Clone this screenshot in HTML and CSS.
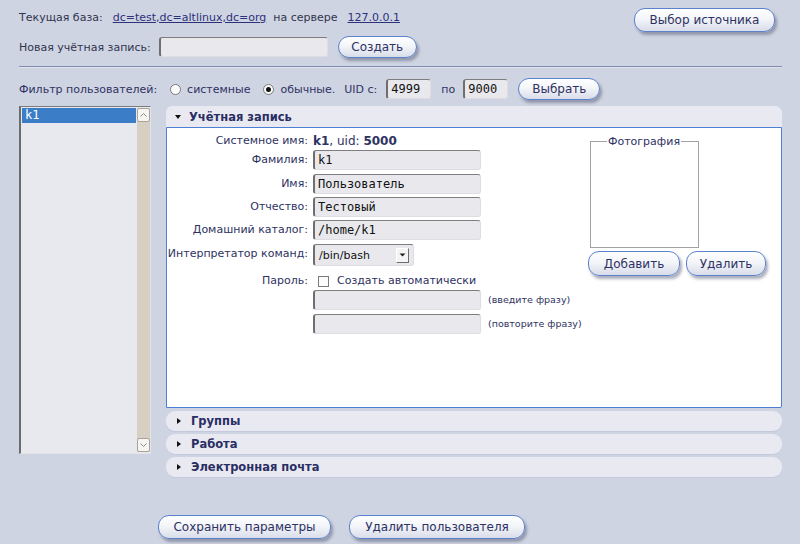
FILE: index.html
```html
<!DOCTYPE html>
<html lang="ru">
<head>
<meta charset="utf-8">
<title>Пользователи</title>
<link rel="stylesheet" href="styles.css">
</head>
<body>
<div class="page">
  <div class="top">
    <div class="top-left">
      <div class="row1">
        <span>Текущая база:</span>
        <a class="link base" href="#">dc=test,dc=altlinux,dc=org</a>
        <span>на сервере</span>
        <a class="link ip" href="#">127.0.0.1</a>
      </div>
      <div class="row2">
        <span>Новая учётная запись:</span>
        <input class="field new-acc" type="text">
        <button class="btn btn-create">Создать</button>
      </div>
    </div>
    <button class="btn btn-source">Выбор источника</button>
  </div>
  <div class="sep"></div>
  <div class="filter">
    <span class="flabel">Фильтр пользователей:</span>
    <span class="radio"></span><span class="rtext">системные</span>
    <span class="radio checked"></span><span class="rtext">обычные.</span>
    <span class="uid">UID с:</span>
    <input class="field small uid-from" type="text" value="4999">
    <span class="po">по</span>
    <input class="field small uid-to" type="text" value="9000">
    <button class="btn btn-select">Выбрать</button>
  </div>
  <div class="main">
    <div class="listbox">
      <div class="list-items">
        <div class="item sel">k1</div>
      </div>
      <div class="scrollbar">
        <div class="sb-btn"><svg width="9" height="6" viewBox="0 0 9 6"><path d="M1.5 4.5 L4.5 1.5 L7.5 4.5" fill="none" stroke="#8a8a8a" stroke-width="1"/></svg></div>
        <div class="sb-track"></div>
        <div class="sb-btn"><svg width="9" height="6" viewBox="0 0 9 6"><path d="M1.5 1.5 L4.5 4.5 L7.5 1.5" fill="none" stroke="#8a8a8a" stroke-width="1"/></svg></div>
      </div>
    </div>
    <div class="panels">
      <div class="hdr open"><span class="tri-down"></span><span class="htext">Учётная запись</span></div>
      <div class="content">
        <div class="form">
          <div class="lbl r-top">Системное имя:</div>
          <div class="val r-top"><b>k1</b>, uid: <b>5000</b></div>
          <div class="hint"></div>

          <div class="lbl">Фамилия:</div>
          <div><input class="field wide" type="text" value="k1"></div>
          <div class="hint"></div>

          <div class="lbl">Имя:</div>
          <div><input class="field wide" type="text" value="Пользователь"></div>
          <div class="hint"></div>

          <div class="lbl">Отчество:</div>
          <div><input class="field wide" type="text" value="Тестовый"></div>
          <div class="hint"></div>

          <div class="lbl">Домашний каталог:</div>
          <div><input class="field wide" type="text" value="/home/k1"></div>
          <div class="hint"></div>

          <div class="lbl">Интерпретатор команд:</div>
          <div><div class="select"><span class="sel-text">/bin/bash</span><span class="sel-btn"><svg width="7" height="4" viewBox="0 0 7 4"><path d="M0.5 0.5 L6.5 0.5 L3.5 3.5 Z" fill="#222"/></svg></span></div></div>
          <div class="hint"></div>

          <div class="lbl r-pass">Пароль:</div>
          <div class="r-pass check-row"><span class="checkbox"></span><span>Создать автоматически</span></div>
          <div class="hint"></div>

          <div class="lbl"></div>
          <div><input class="field wide" type="password"></div>
          <div class="hint">(введите фразу)</div>

          <div class="lbl"></div>
          <div><input class="field wide" type="password"></div>
          <div class="hint">(повторите фразу)</div>
        </div>
        <div class="photo">
          <fieldset class="photo-box">
            <legend>Фотография</legend>
            <div class="photo-area"></div>
          </fieldset>
          <div class="photo-btns">
            <button class="btn btn-add">Добавить</button>
            <button class="btn btn-del">Удалить</button>
          </div>
        </div>
      </div>
      <div class="hdr closed"><span class="tri-right"></span><span class="htext">Группы</span></div>
      <div class="hdr closed"><span class="tri-right"></span><span class="htext">Работа</span></div>
      <div class="hdr closed"><span class="tri-right"></span><span class="htext">Электронная почта</span></div>
    </div>
  </div>
  <div class="actions">
    <button class="btn btn-save">Сохранить параметры</button>
    <button class="btn btn-remove">Удалить пользователя</button>
  </div>
</div>
</body>
</html>
```
FILE: styles.css
```css
html, body {
  margin: 0;
  padding: 0;
}
body {
  background: #cfd4e2;
  font-family: "DejaVu Sans", sans-serif;
  font-size: 11px;
  color: #2e3262;
  width: 800px;
  height: 544px;
  overflow: hidden;
}
.page {
  display: flex;
  flex-direction: column;
}

/* top */
.top {
  display: flex;
  justify-content: space-between;
  align-items: flex-start;
  padding: 8px 25px 0 19px;
}
.top-left {
  display: flex;
  flex-direction: column;
}
.row1 {
  display: flex;
  align-items: center;
  height: 18px;
  gap: 7px;
  color: #30344f;
}
.link {
  color: #2c317a;
  text-decoration: underline;
}
.base {
  margin-left: 3px;
}
.ip {
  margin-left: 3px;
}
.row2 {
  display: flex;
  align-items: center;
  height: 22px;
  margin-top: 10px;
  color: #30344f;
}
.new-acc {
  width: 169px;
  margin-left: 8px;
}
.btn-create {
  margin-left: 10px;
}

.field {
  box-sizing: border-box;
  height: 20px;
  background: #e9e9ed;
  border-style: solid;
  border-width: 1px 1px 1px 2px;
  border-color: #7e7e7e #dedee2 #dedee2 #6e6e6e;
  border-radius: 3px;
  padding: 0 0 0 3px;
  font-family: "DejaVu Sans Mono", monospace;
  font-size: 12px;
  color: #111;
  outline: none;
}

.btn {
  box-sizing: border-box;
  height: 24px;
  padding: 0 13px;
  border: 1px solid #5b82cc;
  border-radius: 11px;
  background: linear-gradient(#ffffff 0%, #f3f5f9 45%, #d9dde9 100%);
  box-shadow: 2px 3px 3px rgba(70, 78, 105, 0.45);
  font-family: "DejaVu Sans", sans-serif;
  font-size: 12px;
  color: #2d3163;
  white-space: nowrap;
}
.btn-create { height: 22px; width: 79px; padding: 0; }
.btn-source { width: 141px; padding: 0; }

/* separator */
.sep {
  margin: 8px 18px 0 19px;
  height: 0;
  border-top: 1px solid #7f8db1;
  border-bottom: 1px solid #dde2ec;
}

/* filter */
.filter {
  display: flex;
  align-items: center;
  height: 22px;
  margin-top: 10px;
  padding-left: 19px;
}
.radio {
  box-sizing: border-box;
  width: 11px;
  height: 11px;
  border-radius: 50%;
  border: 1px solid #7a7a7a;
  background: #fbfbfb;
  margin-left: 13px;
  position: relative;
}
.radio.checked::after {
  content: "";
  position: absolute;
  left: 2px;
  top: 2px;
  width: 5px;
  height: 5px;
  border-radius: 50%;
  background: #111;
}
.rtext { margin-left: 6px; }
.uid { margin-left: 9px; }
.field.small {
  width: 45px;
}
.uid-from { margin-left: 9px; }
.po { margin-left: 10px; }
.uid-to { margin-left: 8px; }
.btn-select { margin-left: 10px; width: 82px; padding: 0; height: 22px; }

/* main */
.main {
  display: flex;
  margin-top: 6px;
  padding-left: 19px;
}
.listbox {
  box-sizing: border-box;
  width: 132px;
  height: 348px;
  display: flex;
  background: #e8e9ee;
  border-style: solid;
  border-width: 1px 1px 1px 2px;
  border-color: #7c7c7c #e4e4e8 #e4e4e8 #6c6c6c;
  padding: 1px 0 1px 1px;
}
.list-items {
  flex: 1;
  padding-top: 0;
}
.item {
  height: 15px;
  line-height: 15px;
  font-family: "DejaVu Sans Mono", monospace;
  font-size: 12px;
  padding-left: 3px;
  margin-right: 1px;
}
.item.sel {
  background: #3c7dc7;
  color: #ffffff;
}
.scrollbar {
  width: 13px;
  display: flex;
  flex-direction: column;
  background: #d6cfc2;
}
.sb-btn {
  box-sizing: border-box;
  height: 14px;
  background: #f6f5f2;
  border: 1px solid #a8a49a;
  border-radius: 2px;
  display: flex;
  align-items: center;
  justify-content: center;
}
.sb-track { flex: 1; }

.panels {
  width: 616px;
  margin-left: 15px;
  display: flex;
  flex-direction: column;
}
.hdr {
  box-sizing: border-box;
  height: 21px;
  display: flex;
  align-items: center;
  background: #e9eaf1;
  padding-left: 9px;
  font-size: 11.5px;
  font-weight: bold;
  color: #2a2e64;
}
.hdr.open {
  border-radius: 6px 7px 0 0;
}
.hdr.closed {
  height: 20px;
  margin-top: 3px;
  border-radius: 9px;
  box-shadow: 0 1px 0 #c3c8dd;
}
.htext { margin-left: 8px; }
.tri-down {
  width: 0;
  height: 0;
  border-left: 3.5px solid transparent;
  border-right: 3.5px solid transparent;
  border-top: 4px solid #111;
}
.tri-right {
  width: 0;
  height: 0;
  margin-left: 2px;
  margin-right: 2px;
  border-top: 3.5px solid transparent;
  border-bottom: 3.5px solid transparent;
  border-left: 4px solid #111;
}

.content {
  box-sizing: border-box;
  height: 281px;
  background: #ffffff;
  border: 1px solid #4d80d4;
  border-radius: 0 0 2px 0;
  display: flex;
}
.form {
  width: 421px;
  flex: none;
  display: grid;
  grid-template-columns: 141px 168px auto;
  grid-template-rows: 22px 24px 23px 23px 24px 26px 20px 24px 22px;
  column-gap: 5px;
  align-items: start;
}
.lbl {
  text-align: right;
  line-height: 20px;
  white-space: nowrap;
  color: #2e3262;
}
.lbl.r-top, .val.r-top {
  margin-top: 4px;
  line-height: 18px;
}
.val {
  font-size: 12px;
  white-space: nowrap;
}
.val b { font-weight: bold; }
.lbl.r-pass, .r-pass {
  margin-top: 2px;
  line-height: 18px;
}
.hint {
  line-height: 20px;
  font-size: 9.5px;
  padding-left: 2px;
  white-space: nowrap;
}
.field.wide {
  width: 168px;
}
.check-row {
  display: flex;
  align-items: center;
  white-space: nowrap;
  padding-left: 5px;
}
.checkbox {
  box-sizing: border-box;
  width: 11px;
  height: 11px;
  border: 1px solid #7a7a7a;
  background: #fbfbfb;
  margin-right: 8px;
}
.select {
  box-sizing: border-box;
  width: 101px;
  height: 22px;
  display: flex;
  align-items: center;
  justify-content: space-between;
  background: #e9e9ed;
  border-style: solid;
  border-width: 1px 1px 1px 2px;
  border-color: #7e7e7e #dedee2 #dedee2 #6e6e6e;
  border-radius: 3px;
  padding: 0 4px 0 4px;
  font-size: 11px;
  color: #111;
}
.sel-btn {
  box-sizing: border-box;
  width: 13px;
  height: 15px;
  background: #f4f4f4;
  border: 1px solid;
  border-color: #ffffff #6e6e6e #6e6e6e #ffffff;
  display: flex;
  align-items: center;
  justify-content: center;
}

.photo {
  margin-top: 7px;
  display: flex;
  flex-direction: column;
}
.photo-box {
  box-sizing: border-box;
  width: 109px;
  margin: 0 0 0 2px;
  padding: 0;
  border: 1px solid #a2a2a2;
}
.photo-box legend {
  padding: 0 1px;
  margin-left: 16px;
  font-size: 11px;
  line-height: 13px;
  color: #2e3262;
}
.photo-area {
  height: 99px;
}
.photo-btns {
  display: flex;
  gap: 6px;
  margin-top: 3px;
}
.btn-add { width: 92px; padding: 0; height: 25px; }
.btn-del { width: 80px; padding: 0; height: 25px; }

.actions {
  display: flex;
  gap: 18px;
  margin-top: 38px;
  padding-left: 158px;
}
.btn-save { width: 173px; padding: 0; }
.btn-remove { width: 176px; padding: 0; }
```
